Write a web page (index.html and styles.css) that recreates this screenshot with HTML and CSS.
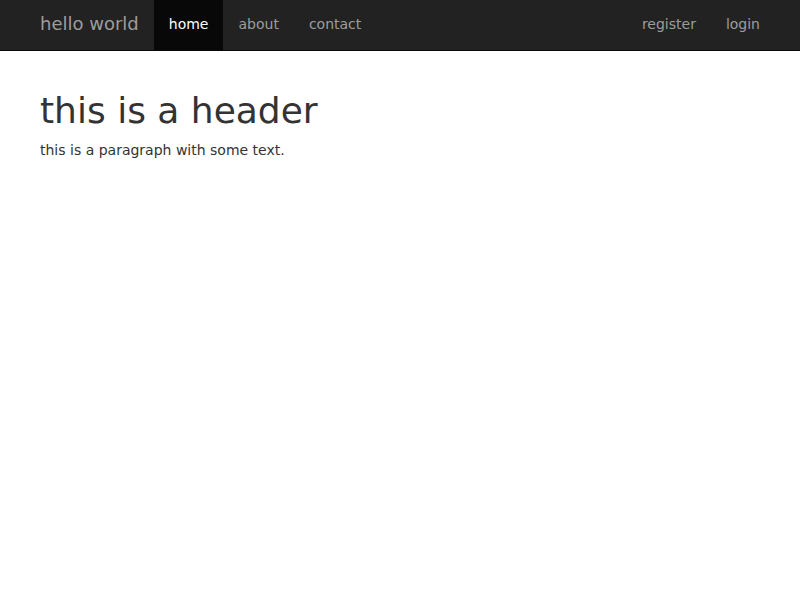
FILE: index.html
```html
<!DOCTYPE html>
<html>
<head>
<meta charset="utf-8">
<link rel="stylesheet" href="styles.css">
</head>
<body>
<nav class="navbar">
  <div class="container nav-inner">
    <a class="brand" href="#">hello world</a>
    <ul class="nav">
      <li><a class="active" href="#">home</a></li>
      <li><a href="#">about</a></li>
      <li><a href="#">contact</a></li>
    </ul>
    <ul class="nav nav-right">
      <li><a href="#">register</a></li>
      <li><a href="#">login</a></li>
    </ul>
  </div>
</nav>
<main class="container page">
  <h1 class="title">this is a header</h1>
  <p class="text">this is a paragraph with some text.</p>
</main>
</body>
</html>
```
FILE: styles.css
```css
* { box-sizing: border-box; }
html, body { margin: 0; padding: 0; }
body {
  font-family: "DejaVu Sans", sans-serif;
  font-size: 14px;
  line-height: 1.42857;
  color: #333;
  background: #fff;
}
.container {
  width: 750px;
  margin: 0 auto;
  padding: 0 15px;
}
.navbar {
  background: #222;
  border-bottom: 1px solid #080808;
  height: 51px;
}
.nav-inner {
  display: flex;
  height: 50px;
}
.brand {
  display: block;
  height: 50px;
  padding: 14px 15px 16px;
  margin-left: -15px;
  font-size: 18px;
  line-height: 20px;
  color: #9d9d9d;
  text-decoration: none;
}
.nav {
  display: flex;
  list-style: none;
  margin: 0;
  padding: 0;
}
.nav a {
  display: block;
  padding: 14px 15px 16px;
  line-height: 20px;
  height: 50px;
  color: #9d9d9d;
  text-decoration: none;
}
.nav a.active {
  background: #080808;
  color: #fff;
}
.nav-right {
  margin-left: auto;
  margin-right: -15px;
}
.page {
  padding-top: 20px;
}
.title {
  font-size: 36px;
  font-weight: 500;
  line-height: 1.1;
  margin: 20px 0 10px;
}
.text {
  margin: 0 0 10px;
}
```
